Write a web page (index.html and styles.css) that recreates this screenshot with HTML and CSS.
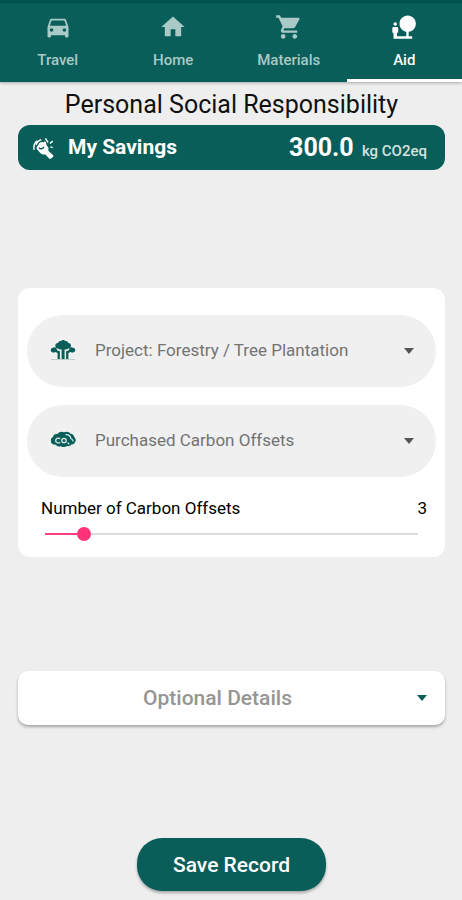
FILE: index.html
```html
<!DOCTYPE html>
<html lang="en">
<head>
<meta charset="UTF-8">
<meta name="viewport" content="width=device-width, initial-scale=1">
<title>Personal Social Responsibility</title>
<link rel="stylesheet" href="styles.css">
</head>
<body>
<nav class="tabs">
  <a href="#travel" class="tab">
    <svg class="tab-icon" viewBox="0 0 24 24"><path d="M18.92 6.01C18.72 5.42 18.16 5 17.5 5h-11c-.66 0-1.21.42-1.42 1.01L3 12v8c0 .55.45 1 1 1h1c.55 0 1-.45 1-1v-1h12v1c0 .55.45 1 1 1h1c.55 0 1-.45 1-1v-8l-2.08-5.99zM6.5 16c-.83 0-1.5-.67-1.5-1.5S5.67 13 6.5 13s1.5.67 1.5 1.5S7.33 16 6.5 16zm11 0c-.83 0-1.5-.67-1.5-1.5s.67-1.5 1.5-1.5 1.5.67 1.5 1.5-.67 1.5-1.5 1.5zM5 11l1.5-4.5h11L19 11H5z"/></svg>
    <span>Travel</span>
  </a>
  <a href="#home" class="tab">
    <svg class="tab-icon" viewBox="0 0 24 24"><path d="M10 20v-6h4v6h5v-8h3L12 3 2 12h3v8z"/></svg>
    <span>Home</span>
  </a>
  <a href="#materials" class="tab">
    <svg class="tab-icon" viewBox="0 0 24 24"><path d="M7 18c-1.1 0-1.99.9-1.99 2S5.9 22 7 22s2-.9 2-2-.9-2-2-2zM1 2v2h2l3.6 7.59-1.35 2.45c-.16.28-.25.61-.25.96 0 1.1.9 2 2 2h12v-2H7.42c-.14 0-.25-.11-.25-.25l.03-.12.9-1.63h7.45c.75 0 1.41-.41 1.75-1.03l3.58-6.49c.08-.14.12-.31.12-.48 0-.55-.45-1-1-1H5.21l-.94-2H1zm16 16c-1.1 0-1.99.9-1.99 2s.89 2 1.99 2 2-.9 2-2-.9-2-2-2z"/></svg>
    <span>Materials</span>
  </a>
  <a href="#aid" class="tab active" aria-current="page">
    <svg class="tab-icon" viewBox="0 0 24 24"><path d="M22.17 9.17c0-3.87-3.13-7-7-7s-7 3.13-7 7c0 3.47 2.52 6.34 5.83 6.89V20H6v-3h1v-4c0-.55-.45-1-1-1H3c-.55 0-1 .45-1 1v4h1v5h16v-2h-3v-3.88c3.47-.41 6.17-3.36 6.17-6.95zM4.5 11c.83 0 1.5-.67 1.5-1.5S5.33 8 4.5 8 3 8.67 3 9.5 3.67 11 4.5 11z"/></svg>
    <span>Aid</span>
  </a>
</nav>

<main class="page">
  <h1 class="title">Personal Social Responsibility</h1>

  <section class="savings">
    <svg class="savings-icon" viewBox="0 0 24 24">
      <path class="hand" d="M5.500 9.500C6 6.500 9 4.500 11.500 6c.5-1.500 2.500-1.300 2.700.3l.8 3.200c1.300.8 2 2 1.900 3.600l-.2 1.900 5 4.500c.7.700.7 1.600 0 2.300l-1.900 1.600c-.7.600-1.600.6-2.200 0L13.500 19c-2.500.4-4.500-.3-6-2.200L4.200 13c-.9-1.300-.2-2.800 1.300-3.500z"/>
      <path class="crease" d="M6.500 11.500c1.500 2 4 1.800 5.500-.7"/>
      <path class="spark" d="M1.200 14c-.8-4 .3-7.500 3.300-10M3.500 8.500C4.500 5.500 6.500 3.500 9 3M13.500 1.500l3 4.500M21.500 4.500l-3 2.700M21.500 11.500l-2.500-.8"/>
    </svg>
    <h2 class="savings-name">My Savings</h2>
    <p class="savings-value">300.0 <span class="unit">kg CO2eq</span></p>
  </section>

  <form class="form" id="aidForm">
    <div class="card">
      <div class="pill">
        <svg class="pill-icon" viewBox="0 1 26 26">
          <path class="ground" d="M1 22.500h24"/>
          <path d="M5.500 9.500c-.8-2 .8-3.700 2.600-3.600C8.700 4.200 10 3.700 11 4c1-1.500 3.500-1.500 4.300 0 1.500-.3 2.700.5 3 1.900 1.900-.1 3.300 1.800 2.500 3.600.2 1.500-1.100 2.300-2.600 2-1.300 1.200-2.900 1-3.600.7V22h-3v-9.800c-1.300.5-2.700.2-3.500-.7-1.500.2-2.800-.5-2.600-2z"/>
          <path d="M.8 13.500c-.3-1.700 1-2.900 2.600-2.700.8-.8 2-.5 2.600.3l1.500 2.300 2.400.8V22H7.600v-6l-2.200-1c-1.700 1.200-4.100.5-4.600-1.500zM25.200 13.500c.3-1.700-1-2.900-2.600-2.700-.8-.8-2-.5-2.600.3l-1.500 2.300-2.400.8V22h2.300v-6l2.200-1c1.700 1.200 4.100.5 4.600-1.500z"/>
        </svg>
        <select class="pill-select" id="project" aria-label="Project">
          <option>Project: Forestry / Tree Plantation</option>
        </select>
        <span class="arrow"></span>
      </div>

      <div class="pill">
        <svg class="pill-icon" viewBox="0 1 26 26">
          <path d="M3 10c.2-2.300 2.200-3.500 4.500-3C9 4.600 12 4.200 14 5.200c2.600-1.200 5.500-.4 6.500 1.500 2.400.2 3.800 1.800 3.700 3.600 1.500 1 2.100 3.200.9 4.700-.4 1.800-2 2.600-3.700 2.400-1 1.500-2.600 2-4.300 1.600-1.800 1.400-4.500 1.500-6.200.2-2 .8-4.200.3-5-1.400-3.100.2-5-1.200-5-3.500-.2-2.200.5-3.700 2.100-4.300z"/>
          <path class="cloud-line" d="M15.500 7.700c3.200-.3 5.300 1.500 5.300 3.800 1.500.6 2.400 1.500 2.400 3M17.500 16c1 0 1.400.6 1.200 1.500"/>
          <path class="cloud-line" d="M10.200 11.700c-2-1-4.500-.3-4.500 1.900s2.500 2.900 4.500 1.900"/>
          <circle class="cloud-line" cx="14" cy="13.500" r="2.200"/>
        </svg>
        <select class="pill-select" id="offsetType" aria-label="Offset type">
          <option>Purchased Carbon Offsets</option>
        </select>
        <span class="arrow"></span>
      </div>

      <div class="amount">
        <label for="offsets">Number of Carbon Offsets</label>
        <output id="offsetsOut" for="offsets">3</output>
      </div>
      <input class="slider" type="range" id="offsets" min="1" max="20" value="3">
    </div>

    <button type="button" class="details" aria-expanded="false">
      <span class="details-text">Optional Details</span>
      <span class="arrow"></span>
    </button>

    <button type="submit" class="save">Save Record</button>
  </form>
</main>
</body>
</html>
```
FILE: styles.css
```css
* {
  box-sizing: border-box;
}
body {
  margin: 0;
  min-height: 100vh;
  background: #eeeeee;
  color: #111;
  font-family: Roboto, "Liberation Sans", sans-serif;
}
h1, h2, p {
  margin: 0;
}

/* top tabs */
.tabs {
  display: flex;
  height: 82px;
  background: #095e5a;
  border-top: 3px solid #00534d;
  box-shadow: 0 1px 3px rgba(0,0,0,0.3);
}
.tab {
  flex: 1;
  display: flex;
  flex-direction: column;
  align-items: center;
  gap: 9px;
  padding-top: 10px;
  border-bottom: 3px solid transparent;
  color: #a9cac7;
  font-size: 15px;
  line-height: 20px;
  font-weight: 500;
  text-decoration: none;
}
.tab.active {
  color: white;
  border-bottom-color: white;
}
.tab-icon {
  width: 28px;
  height: 28px;
  fill: currentColor;
}

.page {
  padding: 8px 17px 8px 18px;
}
.title {
  font-size: 25px;
  line-height: 30px;
  font-weight: 400;
  text-align: center;
}

/* savings bar */
.savings {
  display: flex;
  align-items: center;
  height: 45px;
  margin-top: 5px;
  padding: 0 18px 0 15px;
  background: #095e5a;
  border-radius: 12px;
  color: white;
}
.savings-icon {
  width: 22px;
  height: 22px;
  margin-right: 13px;
}
.hand {
  fill: white;
}
.crease {
  fill: none;
  stroke: #095e5a;
  stroke-width: 1.5;
}
.spark {
  fill: none;
  stroke: white;
  stroke-width: 1.5;
}
.savings-name {
  flex: 1;
  padding-bottom: 2px;
  font-size: 21px;
  line-height: 28px;
  font-weight: 700;
}
.savings-value {
  padding-top: 4px;
  font-size: 25px;
  line-height: 28px;
  font-weight: 700;
}
.unit {
  margin-left: 2px;
  font-size: 15px;
  font-weight: 500;
  color: #d3e2e1;
}

/* form card */
.form {
  display: flex;
  flex-direction: column;
}
.card {
  margin-top: 118px;
  padding: 27px 9px 16px;
  background: white;
  border-radius: 12px;
}
.pill {
  position: relative;
  display: flex;
  align-items: center;
  height: 72px;
  margin-bottom: 18px;
  background: #f0f0f0;
  border-radius: 36px;
}
.pill-icon {
  position: absolute;
  left: 23px;
  width: 26px;
  height: 26px;
  fill: #095e5a;
  pointer-events: none;
}
.ground {
  stroke: #c4cccb;
}
.cloud-line {
  fill: none;
  stroke: #dbe8e6;
  stroke-width: 1.3;
}
.pill-select {
  width: 100%;
  height: 100%;
  padding: 0 50px 2px 68px;
  border: none;
  border-radius: 36px;
  background: transparent;
  color: #737373;
  font-family: inherit;
  font-size: 17px;
  appearance: none;
}
.arrow {
  width: 0;
  height: 0;
  border: 5px solid transparent;
  border-top: 6px solid #555;
  border-bottom: none;
}
.pill .arrow {
  position: absolute;
  right: 22px;
  pointer-events: none;
}
.amount {
  display: flex;
  justify-content: space-between;
  padding: 1px 9px 0 14px;
  font-size: 17px;
  line-height: 24px;
  color: black;
}
.slider {
  display: block;
  width: calc(100% - 22px);
  height: 14px;
  margin: 7px 11px 0;
  background: linear-gradient(to right, #ff4081 11%, #dcdcdc 11%) center / calc(100% - 14px) 2px no-repeat;
  appearance: none;
}
.slider::-webkit-slider-thumb {
  width: 14px;
  height: 14px;
  border-radius: 50%;
  background: #ff3377;
  appearance: none;
}

.details {
  display: flex;
  align-items: center;
  height: 54px;
  margin-top: 114px;
  padding: 0 18px 0 0;
  border: none;
  border-radius: 10px;
  background: white;
  box-shadow: 0 2px 3px rgba(0,0,0,0.3);
  color: #959595;
  font-family: inherit;
  font-size: 21px;
  font-weight: 500;
}
.details-text {
  flex: 1;
}
.details .arrow {
  border-top-color: #095e5a;
}
.save {
  align-self: center;
  height: 53px;
  margin-top: 113px;
  padding: 0 36px;
  border: none;
  border-radius: 25px;
  background: #095e5a;
  box-shadow: 0 2px 3px rgba(0,0,0,0.3);
  color: white;
  font-family: inherit;
  font-size: 21px;
  font-weight: 500;
}
```
